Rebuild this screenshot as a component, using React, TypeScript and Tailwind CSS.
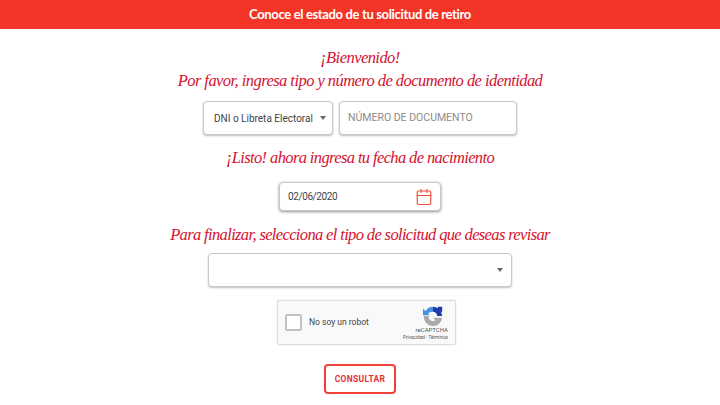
import { Calendar } from "lucide-react";

const heading = "font-['Liberation_Serif',serif] italic text-[16.5px] leading-[23px] text-[#d3122f] whitespace-nowrap";
const box = "flex items-center rounded-[4px] border border-[#c9c9c9] bg-white font-['Roboto',sans-serif] whitespace-nowrap shadow-[0_1px_2px_rgba(0,0,0,0.25)]";

function Caret() {
  return <span className="h-0 w-0 border-x-[3.5px] border-t-[4px] border-x-transparent border-t-[#666]" />;
}

function RecaptchaLogo() {
  return (
    <svg width="20" height="20" viewBox="0 0 24 24" fill="none">
      <path d="M12 1 A11 11 0 0 1 23 12 L17 12 A5 5 0 0 0 12 7 Z" fill="#1c3aa9" />
      <path d="M18 1 L23 1 L23 7 L17 7 Z" fill="#1c3aa9" />
      <path d="M12 1 A11 11 0 0 0 3 6 L0 3 L0 11 L8 11 L6 9 A7 7 0 0 1 12 7 Z" fill="#4a90e2" />
      <path d="M1 12 A11 11 0 0 0 23 14 L12 14 L15 17 A5 5 0 0 1 7 12 Z" fill="#ababab" />
    </svg>
  );
}

export default function App() {
  return (
    <div className="flex h-[405px] w-[720px] flex-col items-center overflow-hidden bg-white">
      <header className="flex h-[29px] w-full shrink-0 items-center justify-center bg-[#f23527] font-['Lato',sans-serif] text-[13px] font-bold tracking-[-0.35px] text-white">
        Conoce el estado de tu solicitud de retiro
      </header>

      <h1 className={`${heading} mt-[17px] tracking-[-0.55px]`}>¡Bienvenido!</h1>
      <h2 className={`${heading} tracking-[-0.55px]`}>Por favor, ingresa tipo y número de documento de identidad</h2>

      <div className="mt-[9px] flex gap-[6px]">
        <div className={`${box} h-[34px] w-[130px] justify-between pl-[10px] pr-[6px] text-[10px] text-[#444]`}>
          <span>DNI o Libreta Electoral</span>
          <Caret />
        </div>
        <div className={`${box} h-[34px] w-[178px] pl-[8px] text-[10.5px] text-[#8b8b8b]`}>
          NÚMERO DE DOCUMENTO
        </div>
      </div>

      <h2 className={`${heading} mt-[11px] tracking-[-0.62px]`}>¡Listo! ahora ingresa tu fecha de nacimiento</h2>

      <div className={`${box} mt-[13px] h-[29px] w-[162px] justify-between pl-[8px] pr-[7px] text-[10px] tracking-[-0.4px] text-[#444] shadow-[0_1px_3px_rgba(0,0,0,0.45)]`}>
        <span>02/06/2020</span>
        <Calendar className="h-[18px] w-[18px] text-[#f0523f]" strokeWidth={1.6} />
      </div>

      <h2 className={`${heading} mt-[12px] tracking-[-0.64px]`}>Para finalizar, selecciona el tipo de solicitud que deseas revisar</h2>

      <div className={`${box} mt-[7px] h-[34px] w-[304px] justify-end pr-[8px]`}>
        <Caret />
      </div>

      <div className="ml-[13px] mt-[13px] flex h-[45px] w-[179px] items-center justify-between rounded-[2px] border border-[#dcdcdc] bg-[#f9f9f9] pl-[7px] pr-[7px] font-['Roboto',sans-serif] shadow-[0_0_2px_rgba(0,0,0,0.12)]">
        <div className="flex items-center gap-[7px]">
          <span className="h-[17px] w-[17px] rounded-[2px] border-2 border-[#c1c1c1] bg-white" />
          <span className="text-[8.5px] text-[#444]">No soy un robot</span>
        </div>
        <div className="flex flex-col items-end self-stretch justify-end pb-[2px]">
          <span className="mr-[5px] block h-[20px]"><RecaptchaLogo /></span>
          <span className="text-[6px] leading-[8px] text-[#555]">reCAPTCHA</span>
          <span className="text-[4.7px] leading-[8px] text-[#555]">Privacidad - Términos</span>
        </div>
      </div>

      <button className="mt-[19px] h-[30px] w-[72px] rounded-[4px] border-2 border-[#f0413a] bg-white font-['Roboto',sans-serif] text-[8.5px] font-bold tracking-[0.3px] text-[#e5303a]">
        CONSULTAR
      </button>
    </div>
  );
}
